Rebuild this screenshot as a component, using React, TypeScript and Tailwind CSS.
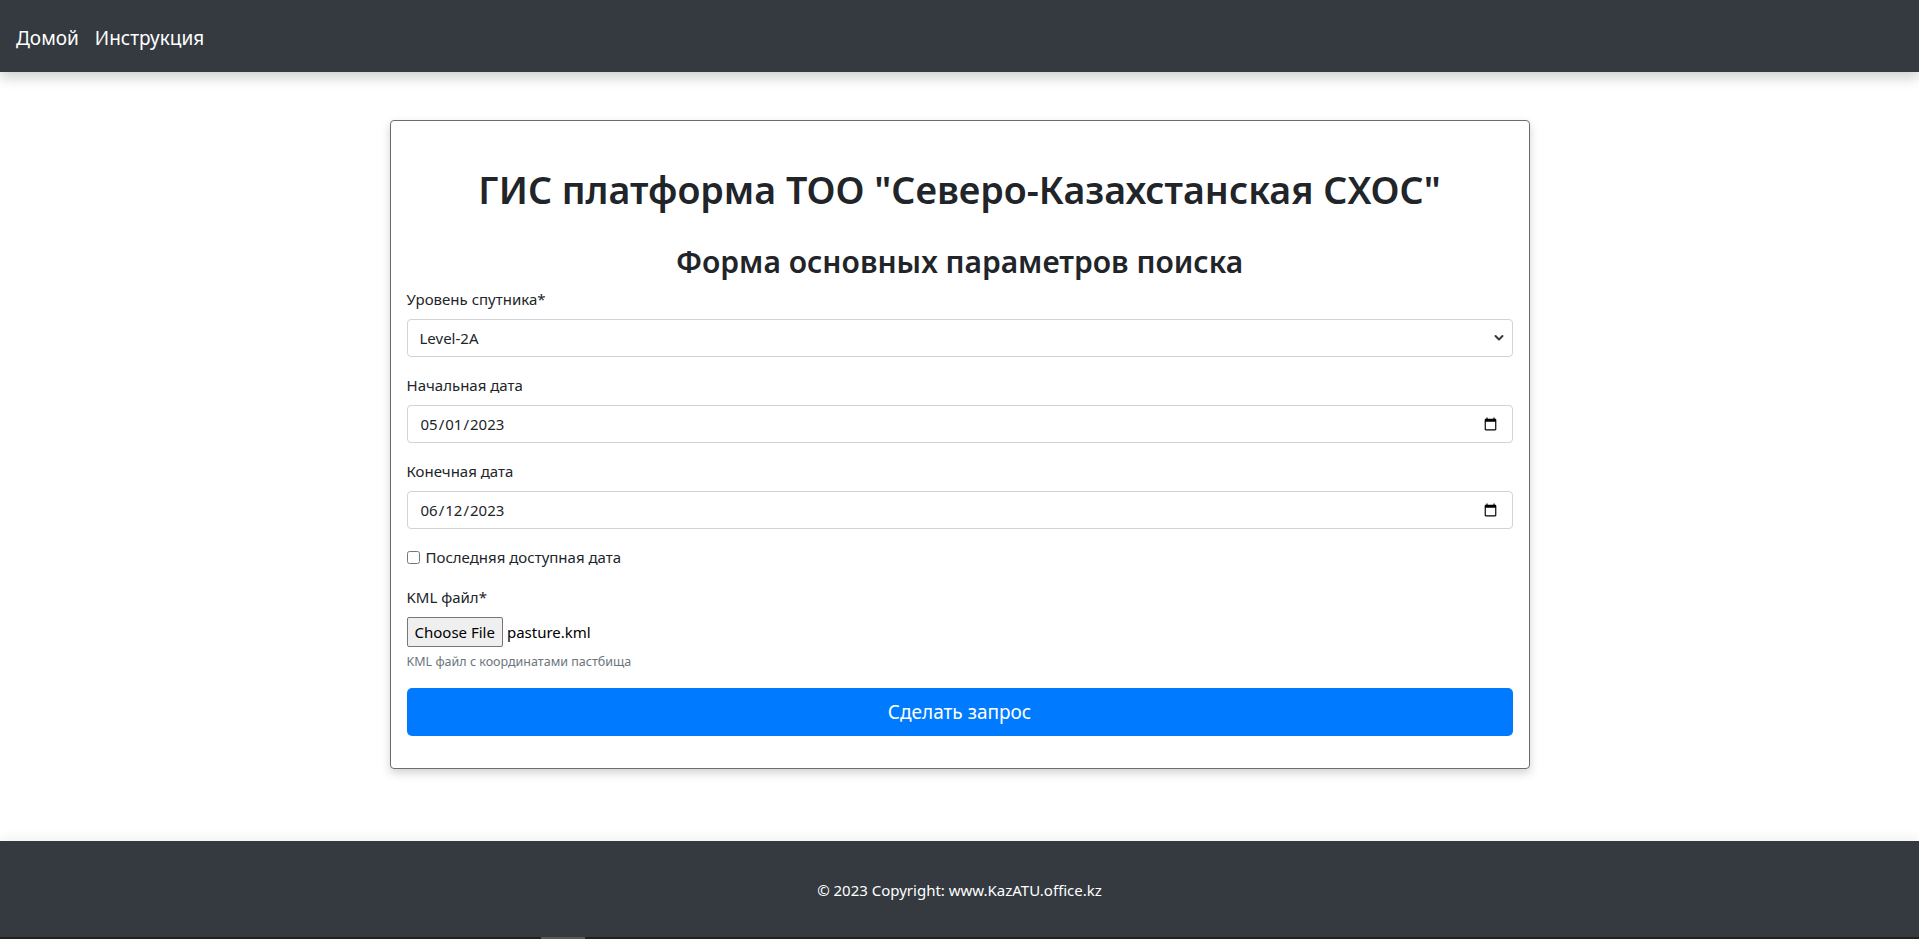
import { useState } from "react";

const font = { fontFamily: '"Noto Sans", "Open Sans", sans-serif' };

const Field = ({ label, children }: { label: string; children: React.ReactNode }) => (
  <div className="mb-4">
    <label className="mb-2 block text-[15px] leading-6 text-[#212529]">{label}</label>
    {children}
  </div>
);

export default function App() {
  const [level, setLevel] = useState("Level-2A");
  const [start, setStart] = useState("2023-05-01");
  const [end, setEnd] = useState("2023-06-12");
  const [latest, setLatest] = useState(false);

  const inputCls =
    "block h-[38px] w-full rounded-[4px] border border-[#ced4da] bg-white px-3 text-[15px] leading-6 text-[#212529] outline-none";

  return (
    <div className="flex min-h-screen flex-col bg-white" style={font}>
      <nav className="relative z-10 flex h-[72px] items-center gap-4 bg-[#343a40] px-4 pt-[4px] shadow-[0_6px_12px_rgba(0,0,0,0.18)]">
        <a href="#" className="text-[19px] leading-6 text-white">Домой</a>
        <a href="#" className="text-[19px] leading-6 text-white">Инструкция</a>
      </nav>

      <main className="px-3 pt-[48px]">
        <div className="mx-auto w-[1140px] rounded-[4px] border border-[#6c6c6c] bg-white px-4 pb-8 pt-[45px] shadow-[0_4px_10px_rgba(0,0,0,0.18)]">
          <h1 className="mb-[29px] text-center text-[37.6px] font-semibold leading-[48px] text-[#212529]">
            ГИС платформа ТОО "Северо-Казахстанская СХОС"
          </h1>
          <h2 className="mb-[6px] text-center text-[30px] font-semibold leading-[38px] text-[#212529]">
            Форма основных параметров поиска
          </h2>

          <form onSubmit={(e) => e.preventDefault()}>
            <Field label="Уровень спутника*">
              <div className="relative">
                <select
                  value={level}
                  onChange={(e) => setLevel(e.target.value)}
                  className={`${inputCls} appearance-none`}
                >
                  <option>Level-2A</option>
                  <option>Level-1C</option>
                </select>
                <svg
                  className="pointer-events-none absolute right-[9px] top-1/2 h-[8px] w-[10px] -translate-y-1/2"
                  viewBox="0 0 10 8"
                  fill="none"
                  stroke="#343a40"
                  strokeWidth="2"
                  strokeLinecap="round"
                  strokeLinejoin="round"
                >
                  <path d="M1.5 2 5 5.5 8.5 2" />
                </svg>
              </div>
            </Field>

            <Field label="Начальная дата">
              <input type="date" value={start} onChange={(e) => setStart(e.target.value)} className={inputCls} />
            </Field>

            <Field label="Конечная дата">
              <input type="date" value={end} onChange={(e) => setEnd(e.target.value)} className={inputCls} />
            </Field>

            <div className="mb-4 flex h-6 items-center gap-[6px]">
              <input
                id="latest"
                type="checkbox"
                checked={latest}
                onChange={(e) => setLatest(e.target.checked)}
                className="m-0 h-[13px] w-[13px]"
              />
              <label htmlFor="latest" className="text-[15px] leading-6 text-[#212529]">
                Последняя доступная дата
              </label>
            </div>

            <div className="mb-4">
              <label className="mb-2 block text-[15px] leading-6 text-[#212529]">KML файл*</label>
              <div className="flex h-[30px] items-center">
                <button
                  type="button"
                  className="h-[30px] rounded-[2px] border border-[#767676] bg-[#efefef] px-[7px] text-[15px] leading-6 text-black"
                >
                  Choose File
                </button>
                <span className="ml-[4px] text-[15px] leading-6 text-black">pasture.kml</span>
              </div>
              <div className="mt-1 text-[12.5px] leading-[21px] text-[#6c757d]">
                KML файл с координатами пастбища
              </div>
            </div>

            <button
              type="submit"
              className="block h-[48px] w-full rounded-[5px] bg-[#007bff] text-[19px] leading-6 text-white"
            >
              Сделать запрос
            </button>
          </form>
        </div>
      </main>

      <footer className="mt-auto flex h-[98px] flex-col bg-[#343a40] shadow-[0_-4px_10px_rgba(0,0,0,0.05)]">
        <div className="flex flex-1 items-center justify-center pt-[2px] text-[15px] text-white">
          © 2023 Copyright: www.KazATU.office.kz
        </div>
        <div className="flex h-[2px] bg-[#1f211c]">
          <div className="ml-[541px] w-[44px] bg-[#5a5a55]" />
        </div>
      </footer>
    </div>
  );
}
